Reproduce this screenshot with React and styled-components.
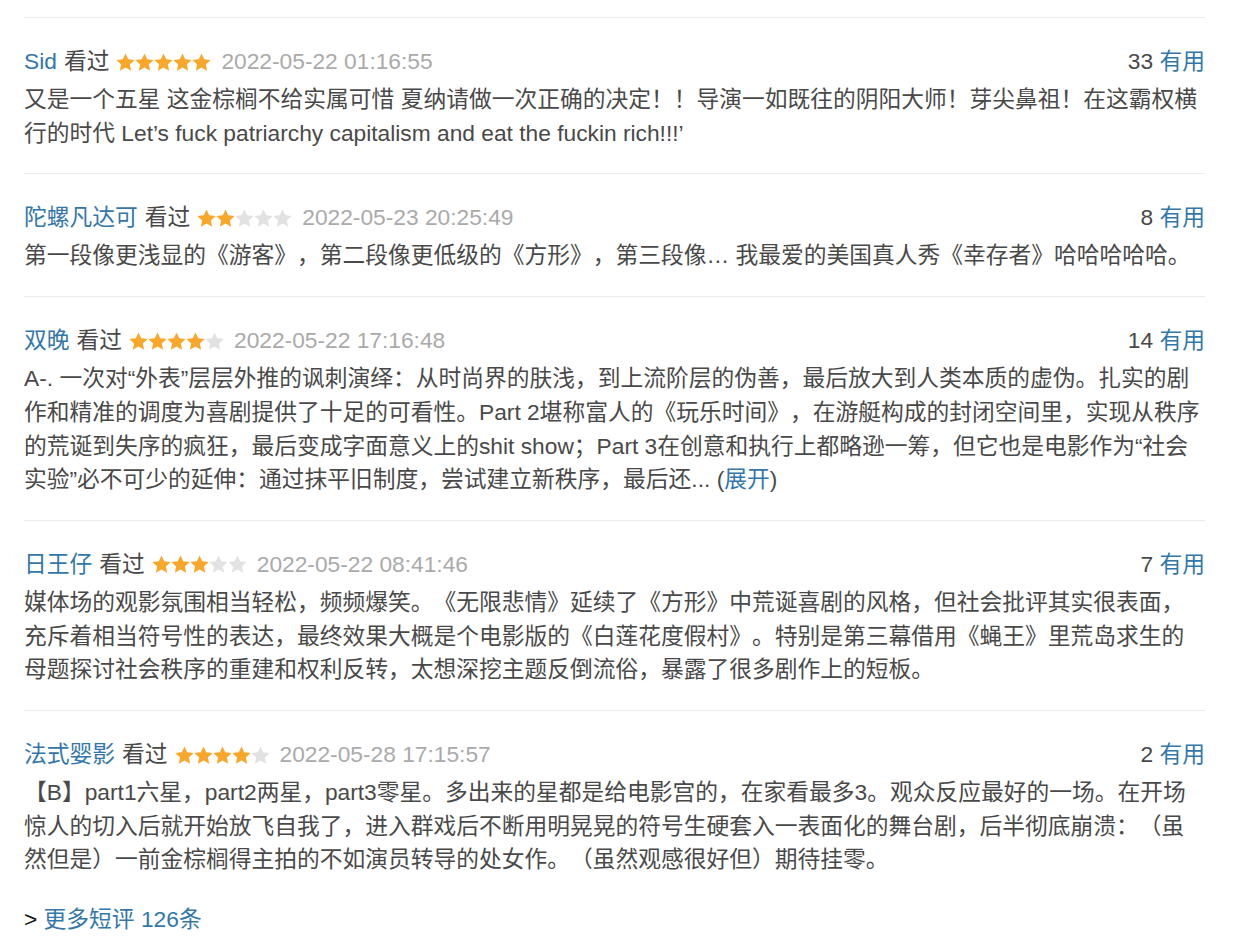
import styled, { createGlobalStyle } from 'styled-components';

const GlobalStyle = createGlobalStyle`
  body {
    margin: 0;
    background: #fff;
    font-family: "Liberation Sans", Arial, "Noto Sans CJK SC", sans-serif;
    color: #494949;
    text-spacing-trim: space-all;
  }
`;

const comments = [
  {
    user: 'Sid',
    rating: 5,
    time: '2022-05-22 01:16:55',
    votes: 33,
    text: '又是一个五星 这金棕榈不给实属可惜 夏纳请做一次正确的决定！！导演一如既往的阴阳大师！芽尖鼻祖！在这霸权横行的时代 Let’s fuck patriarchy capitalism and eat the fuckin rich!!!’',
  },
  {
    user: '陀螺凡达可',
    rating: 2,
    time: '2022-05-23 20:25:49',
    votes: 8,
    text: '第一段像更浅显的《游客》，第二段像更低级的《方形》，第三段像… 我最爱的美国真人秀《幸存者》哈哈哈哈哈。',
  },
  {
    user: '双晚',
    rating: 4,
    time: '2022-05-22 17:16:48',
    votes: 14,
    text: 'A-. 一次对“外表”层层外推的讽刺演绎：从时尚界的肤浅，到上流阶层的伪善，最后放大到人类本质的虚伪。扎实的剧作和精准的调度为喜剧提供了十足的可看性。Part 2堪称富人的《玩乐时间》，在游艇构成的封闭空间里，实现从秩序的荒诞到失序的疯狂，最后变成字面意义上的shit show；Part 3在创意和执行上都略逊一筹，但它也是电影作为“社会实验”必不可少的延伸：通过抹平旧制度，尝试建立新秩序，最后还...',
    more: true,
  },
  {
    user: '日王仔',
    rating: 3,
    time: '2022-05-22 08:41:46',
    votes: 7,
    text: '媒体场的观影氛围相当轻松，频频爆笑。《无限悲情》延续了《方形》中荒诞喜剧的风格，但社会批评其实很表面，充斥着相当符号性的表达，最终效果大概是个电影版的《白莲花度假村》。特别是第三幕借用《蝇王》里荒岛求生的母题探讨社会秩序的重建和权利反转，太想深挖主题反倒流俗，暴露了很多剧作上的短板。',
  },
  {
    user: '法式婴影',
    rating: 4,
    time: '2022-05-28 17:15:57',
    votes: 2,
    text: '【B】part1六星，part2两星，part3零星。多出来的星都是给电影宫的，在家看最多3。观众反应最好的一场。在开场惊人的切入后就开始放飞自我了，进入群戏后不断用明晃晃的符号生硬套入一表面化的舞台剧，后半彻底崩溃：（虽然但是）一前金棕榈得主拍的不如演员转导的处女作。（虽然观感很好但）期待挂零。',
  },
];

// five-point star, 19px cell
const STAR =
  '9.5,0.4 12.2,6.28 18.63,7.03 13.87,11.42 15.14,17.77 9.5,14.6 3.86,17.77 5.13,11.42 0.37,7.03 6.8,6.28';

function Stars({ rating }) {
  return (
    <StarsSvg width="95" height="18" viewBox="0 0 95 18">
      {[0, 1, 2, 3, 4].map((i) => (
        <polygon
          key={i}
          points={STAR}
          transform={`translate(${i * 19} 0)`}
          fill={i < rating ? '#f9a72b' : '#e2e2e2'}
        />
      ))}
    </StarsSvg>
  );
}

function CommentItem({ c }) {
  return (
    <Item>
      <Header>
        <Info>
          <UserLink>{c.user}</UserLink>
          <Status>看过</Status>
          <Stars rating={c.rating} />
          <Time>{c.time}</Time>
        </Info>
        <Votes>
          {c.votes} <BlueLink>有用</BlueLink>
        </Votes>
      </Header>
      <Body>
        {c.text}
        {c.more && (
          <>
            {' '}(<BlueLink>展开</BlueLink>)
          </>
        )}
      </Body>
    </Item>
  );
}

export default function App() {
  return (
    <>
      <GlobalStyle />
      <Wrapper>
        {comments.map((c) => (
          <CommentItem key={c.user} c={c} />
        ))}
        <MoreLine>
          &gt; <BlueLink>更多短评 126条</BlueLink>
        </MoreLine>
      </Wrapper>
    </>
  );
}

const Wrapper = styled.div`
  width: 1181px;
  padding: 17px 0 0 24px;
  font-size: 22.75px;
  line-height: 33.7px;
`;

const Item = styled.div`
  border-top: 1px solid #ebebeb;
  padding: 27px 0 23px;
`;

const Header = styled.div`
  display: flex;
  justify-content: space-between;
  align-items: center;
  height: 33px;
`;

const Info = styled.div`
  display: flex;
  align-items: center;
  gap: 7px;
  white-space: nowrap;
`;

const UserLink = styled.a`
  color: #3377aa;
  text-decoration: none;
`;

const Status = styled.span`
  color: #494949;
`;

const StarsSvg = styled.svg`
  display: block;
  margin: 0 3px 0 0;
`;

const Time = styled.span`
  color: #aaaaaa;
`;

const Votes = styled.span`
  color: #494949;
`;

const BlueLink = styled.a`
  color: #3377aa;
  text-decoration: none;
`;

const Body = styled.p`
  margin: 5px 0 0;
  color: #494949;
`;

const MoreLine = styled.div`
  margin-top: 3px;
  color: #111;
`;
